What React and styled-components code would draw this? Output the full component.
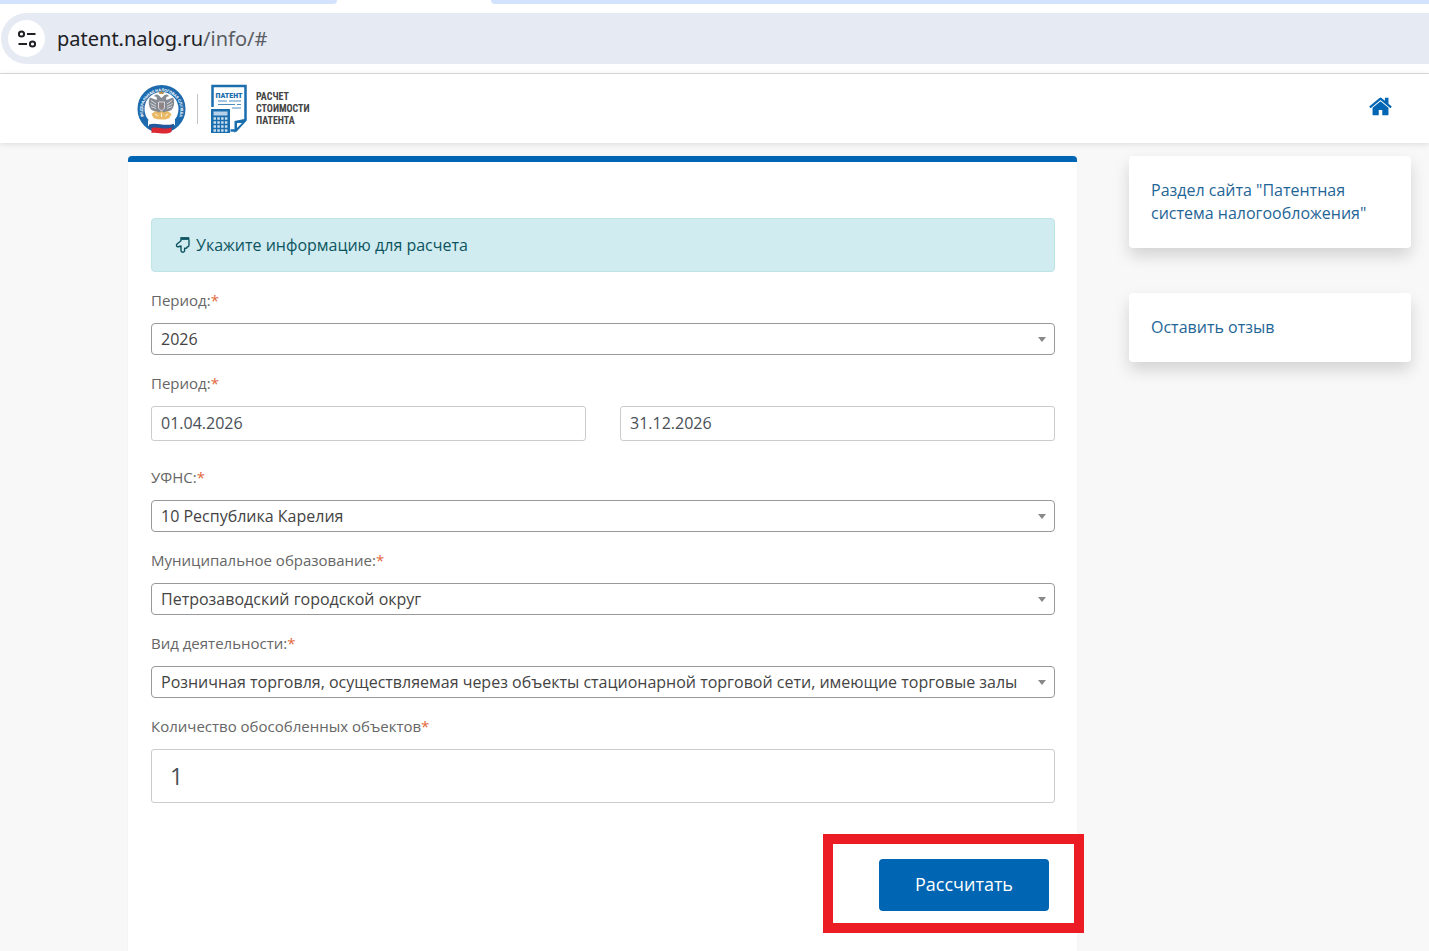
import React from 'react';
import styled, { createGlobalStyle, css } from 'styled-components';

const colours = {
    primary: '#0066b3',
    link: '#1f6596',
    page: '#f8f8f8',
    label: '#666',
    text: '#444',
    required: '#e2683c',
};

const GlobalStyle = createGlobalStyle`
    * {
        box-sizing: border-box;
    }

    body {
        margin: 0;
        background: ${colours.page};
        color: ${colours.text};
        font-family: 'Open Sans', 'Noto Sans', sans-serif;
        font-size: 16px;
        line-height: 23px;
    }
`;

const Page = styled.div`
    display: flex;
    flex-direction: column;
    min-height: 100vh;
`;

const TabStrip = styled.div`
    display: flex;
    gap: 154px;
    height: 4px;
    background: #fff;
`;

const Tab = styled.div`
    background: #d3e3fd;
    width: 337px;
    border-bottom-right-radius: 8px;

    ${props => props.$rest && css`
        flex: 1;
        border-radius: 0 0 0 8px;
    `};
`;

const Toolbar = styled.div`
    background: #fff;
    border-bottom: 1px solid #dcdde0;
    padding: 9px 0 9px 1px;
`;

const AddressBar = styled.div`
    display: flex;
    align-items: center;
    gap: 12px;
    height: 51px;
    padding-left: 7px;
    border-radius: 26px 0 0 26px;
    background: #e6eaf3;
`;

const SiteButton = styled.button`
    display: flex;
    align-items: center;
    justify-content: center;
    width: 37px;
    height: 37px;
    padding: 0;
    border: none;
    border-radius: 50%;
    background: #fff;
`;

const Url = styled.span`
    font-family: 'Noto Sans', sans-serif;
    font-size: 20px;
    line-height: 28px;
    color: #5a5d62;
`;

const Host = styled.span`
    color: #202124;
`;

const Header = styled.header`
    display: flex;
    align-items: center;
    justify-content: space-between;
    height: 69px;
    padding: 0 37px 0 137px;
    background: #fff;
    box-shadow: 0 1px 6px rgba(0, 0, 0, .12);
`;

const Brand = styled.a`
    display: flex;
    align-items: center;
    color: #444;
    text-decoration: none;
`;

const Divider = styled.span`
    width: 1px;
    height: 30px;
    margin: 0 13px 0 11px;
    background: #c4c4c4;
`;

const BrandName = styled.span`
    margin-left: 8px;
    font: bold 10px/12px 'Roboto Condensed', Roboto, sans-serif;
    text-transform: uppercase;
`;

const HomeLink = styled.a`
    display: flex;
    margin-bottom: 5px;
`;

const Layout = styled.div`
    display: flex;
    flex: 1;
    gap: 52px;
    padding: 13px 18px 0 128px;
`;

const Panel = styled.main`
    flex: 1;
    min-width: 0;
    padding: 56px 22px 40px 23px;
    border-top: 6px solid ${colours.primary};
    border-radius: 4px 4px 0 0;
    background: #fff;
    box-shadow: 0 0 3px rgba(0, 0, 0, .04);
`;

const Alert = styled.div`
    display: flex;
    align-items: center;
    gap: 5px;
    height: 54px;
    margin-bottom: 18px;
    padding: 0 23px;
    border: 1px solid #bee5e6;
    border-radius: 4px;
    background: #d1ecf0;
    color: #0c5460;
`;

const Field = styled.div`
    display: flex;
    flex-direction: column;
    gap: 12px;
    margin-bottom: ${props => (props.$wide ? '26px' : '18px')};
`;

const Label = styled.label`
    font-size: 15px;
    line-height: 21px;
    color: ${colours.label};
`;

const Required = styled.span`
    color: ${colours.required};
`;

const SelectBox = styled.div`
    position: relative;

    &:after {
        position: absolute;
        top: 14px;
        right: 9px;
        content: '';
        border: 4px solid transparent;
        border-top: 5px solid #888;
        border-bottom: none;
        pointer-events: none;
    }
`;

const StyledSelect = styled.select`
    display: block;
    width: 100%;
    height: 32px;
    padding: 0 28px 0 9px;
    border: 1px solid #999;
    border-radius: 4px;
    appearance: none;
    background: #fff;
    color: ${colours.text};
    font: inherit;
`;

const DateRow = styled.div`
    display: flex;
    gap: 34px;
`;

const Input = styled.input`
    flex: 1;
    min-width: 0;
    height: 35px;
    padding: 0 9px 2px;
    border: 1px solid #ccc;
    border-radius: 3px;
    background: #fff;
    color: #495057;
    font: inherit;

    ${props => props.$large && css`
        flex: none;
        height: 54px;
        padding: 0 18px;
        font-size: 23px;
    `};
`;

const Actions = styled.div`
    position: relative;
    display: flex;
    justify-content: flex-end;
    margin-top: 56px;
    padding-right: 6px;
`;

const Submit = styled.button`
    width: 170px;
    height: 52px;
    padding: 0 0 2px;
    border: none;
    border-radius: 4px;
    background: ${colours.primary};
    color: #fff;
    font: inherit;
    font-size: 18px;
    cursor: pointer;
`;

const Highlight = styled.div`
    position: absolute;
    top: -25px;
    right: -29px;
    width: 261px;
    height: 99px;
    border: 10px solid #ec1c24;
    pointer-events: none;
`;

const Sidebar = styled.aside`
    display: flex;
    flex-direction: column;
    gap: 45px;
    width: 282px;
`;

const LinkCard = styled.a`
    padding: 23px 22px;
    border-radius: 4px;
    background: #fff;
    box-shadow: 0 8px 16px rgba(0, 0, 0, .15);
    color: ${colours.link};
    text-decoration: none;
`;

const TuneIcon = () => (
  <svg width="20" height="20" viewBox="0 0 20 20" fill="none" stroke="#202124" strokeWidth="2">
    <circle cx="4.500" cy="5" r="2.600" />
    <path d="M10 5h8.500M1.500 15h8.500" />
    <circle cx="15.500" cy="15" r="2.600" />
  </svg>
);

const HandDownIcon = () => (
  <svg width="16" height="18" viewBox="0 0 16 18" fill="none" stroke="#0c5460" strokeWidth="1.400" strokeLinejoin="round">
    <path d="M6 3.500v1.200L2 8c-1.300 1.600-.1 3.100 1.400 2.700L6 10v4.500c0 2.200 3.600 2.300 3.600 0v-2.200c1.700.3 2.400-.2 2.600-1.300 1.400-.1 1.800-.8 1.800-2V3.500" />
    <path d="M5.300 2.500h9" strokeWidth="2.800" />
  </svg>
);

const HomeIcon = () => (
  <svg width="23" height="19" viewBox="0 240 1664 1312" fill={colours.primary}>
    <path d="M1408 992v480q0 26-19 45t-45 19h-384v-384h-256v384h-384q-26 0-45-19t-19-45v-480q0-1 .5-3t.5-3l575-474 575 474q1 2 1 6zm223-69l-62 74q-8 9-21 11h-3q-13 0-21-7l-692-577-692 577q-12 8-24 7-13-2-21-11l-62-74q-8-10-7-23.500t11-21.500l719-599q32-26 76-26t76 26l244 204v-195q0-14 9-23t23-9h192q14 0 23 9t9 23v408l219 182q10 8 11 21.500t-7 23.500z" />
  </svg>
);

const Emblem = () => (
  <svg width="49" height="52" viewBox="0 0 49 52">
    <defs>
      <path id="ring" d="M9.500 38.500A18.800 18.800 0 1 1 39.500 38.500" />
    </defs>
    <circle cx="24.500" cy="26" r="20.500" fill="#fff" stroke="#1d6bae" strokeWidth="7" />
    <text fill="#fff" fontSize="4" fontWeight="bold" fontFamily="Roboto, sans-serif">
      <textPath href="#ring" startOffset="50%" textAnchor="middle">ФЕДЕРАЛЬНАЯ НАЛОГОВАЯ СЛУЖБА</textPath>
    </text>
    <g fill="#858a92">
      <path d="M22 12.500c-2-1.500-4-1-5 .8l2.200.4c.8 1 .8 2.300.3 3.300L13 14.500c-2 4-1.500 9 1.500 12.500l5 2 1.500 3h7l1.500-3 5-2c3-3.500 3.500-8.500 1.500-12.500L29.500 17c-.5-1-.5-2.300.3-3.300l2.200-.4c-1-1.800-3-2.300-5-.8L24.500 15z" />
      <path d="M22.500 11l-.8-2.600 1.800.8 1-1.700 1 1.700 1.800-.8-.8 2.600z" fill="#b98c4a" />
    </g>
    <path d="M14 17.500l5 3.500M13.500 20.500l5.500 3M14 23.500l5 2M35 17.500L30 21M35.500 20.500L30 23.500M35 23.500l-5 2" stroke="#e9ebee" strokeWidth=".8" />
    <path d="M21.500 19h6v6l-3 3-3-3z" fill="#8d8587" stroke="#e9ebee" strokeWidth=".8" />
    <path d="M14.500 31l4-3 3.500 1.500 2.500-1.500 2.500 1.500 3.500-1.500 4 3-2 4-4 1.500h-8L16.500 35z" fill="#e9b965" />
    <path d="M18 31l3 2M31 31l-3 2M24.500 30v4" stroke="#fff" strokeWidth=".8" />
    <path d="M11 37.500c8-3.500 15 2.500 27-1.500v6c-11 4-18-2-27 1z" fill="#fff" />
    <path d="M12 41.500c8-2.500 15 2.500 25-.8v4.800c-10 3.500-17-2-25 .5z" fill="#24589c" />
    <path d="M14.500 45c7-2 12 2.500 20-.5v4.500c-7 3.500-14-.5-20 1z" fill="#dc2832" />
  </svg>
);

const PatentLogo = () => (
  <svg width="37" height="50" viewBox="0 0 37 50">
    <path d="M1.500 23V2h33v34L25 46.500h-5.500" fill="#fff" stroke="#1b6eae" strokeWidth="2.500" />
    <path d="M35.700 34.500L23.500 49V37z" fill="#1b6eae" />
    <path d="M26 39h5l-5 5z" fill="#fff" />
    <text x="18" y="13.500" textAnchor="middle" fill="#1b6eae" fontSize="8" fontWeight="900" fontFamily="'Roboto Condensed', Roboto, sans-serif">ПАТЕНТ</text>
    <path d="M7 17h9M18 17h12M7 20.500h17M26 20.500h4M21 24h9" stroke="#4b8dc1" />
    <path d="M0 25h19v24H0z" fill="#1b6eae" />
    <path d="M2.500 27.500h14v4h-14z" fill="#b6d2e8" />
    <path d="M2.500 34.500h14M2.500 38.500h14M2.500 42.500h14M2.500 46.500h14" stroke="#c9deee" strokeWidth="2.500" strokeDasharray="2.500 1.300" />
  </svg>
);

const SelectField = ({ id, label, value }) => (
  <Field>
    <Label htmlFor={id}>{label}<Required>*</Required></Label>
    <SelectBox>
      <StyledSelect id={id} defaultValue={value}>
        <option value={value}>{value}</option>
      </StyledSelect>
    </SelectBox>
  </Field>
);

export default function App() {
  return (
    <Page>
      <GlobalStyle />
      <TabStrip>
        <Tab />
        <Tab $rest />
      </TabStrip>
      <Toolbar>
        <AddressBar>
          <SiteButton type="button"><TuneIcon /></SiteButton>
          <Url><Host>patent.nalog.ru</Host>/info/#</Url>
        </AddressBar>
      </Toolbar>
      <Header>
        <Brand href="#">
          <Emblem />
          <Divider />
          <PatentLogo />
          <BrandName>Расчет<br />стоимости<br />патента</BrandName>
        </Brand>
        <HomeLink href="#"><HomeIcon /></HomeLink>
      </Header>
      <Layout>
        <Panel>
          <Alert><HandDownIcon />Укажите информацию для расчета</Alert>
          <SelectField id="year" label="Период:" value="2026" />
          <Field $wide>
            <Label htmlFor="date-from">Период:<Required>*</Required></Label>
            <DateRow>
              <Input id="date-from" type="text" defaultValue="01.04.2026" />
              <Input id="date-to" type="text" aria-labelledby="date-from" defaultValue="31.12.2026" />
            </DateRow>
          </Field>
          <SelectField id="region" label="УФНС:" value="10 Республика Карелия" />
          <SelectField id="district" label="Муниципальное образование:" value="Петрозаводский городской округ" />
          <SelectField
            id="activity"
            label="Вид деятельности:"
            value="Розничная торговля, осуществляемая через объекты стационарной торговой сети, имеющие торговые залы" />
          <Field>
            <Label htmlFor="count">Количество обособленных объектов<Required>*</Required></Label>
            <Input $large id="count" type="text" defaultValue="1" />
          </Field>
          <Actions>
            <Submit type="button">Рассчитать</Submit>
            <Highlight />
          </Actions>
        </Panel>
        <Sidebar>
          <LinkCard href="#">Раздел сайта "Патентная система налогообложения"</LinkCard>
          <LinkCard href="#">Оставить отзыв</LinkCard>
        </Sidebar>
      </Layout>
    </Page>
  );
}
